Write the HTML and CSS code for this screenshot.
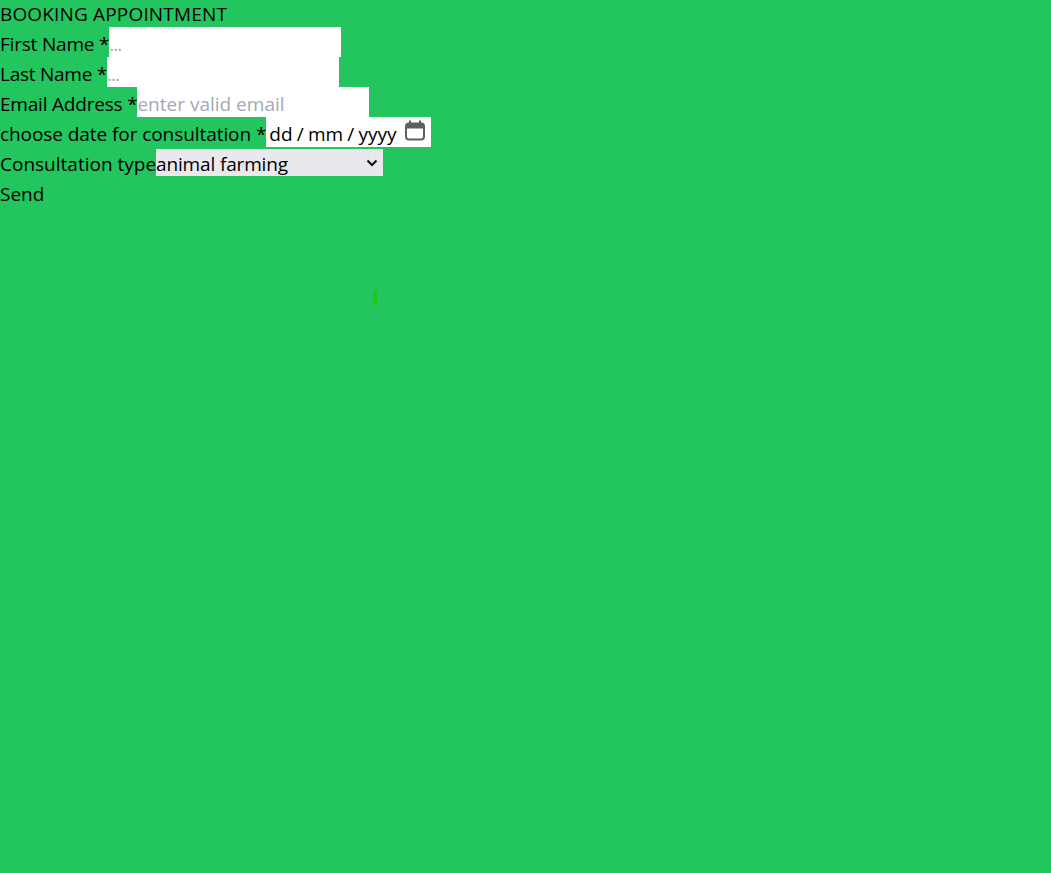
FILE: index.html
```html
<!DOCTYPE html>
<html lang="en">
<head>
    <meta charset="UTF-8">
    <meta name="viewport" content="width=device-width, initial-scale=1.0">
    <title>Booking Appointment</title>
    <link rel="stylesheet" href="styles.css">
</head>
<body>
    <form class="booking-form">
        <div class="form-title">BOOKING APPOINTMENT</div>
        <div class="form-row">
            <label for="firstName" class="label-tight">First Name *</label>
            <input type="text" id="firstName" class="text-field" placeholder="...">
        </div>
        <div class="form-row">
            <label for="lastName" class="label-last">Last Name *</label>
            <input type="text" id="lastName" class="text-field" placeholder="...">
        </div>
        <div class="form-row">
            <label for="email" class="label-tight">Email Address *</label>
            <input type="email" id="email" class="text-field email-field" placeholder="enter valid email">
        </div>
        <div class="form-row">
            <label class="label-date">choose date for consultation *</label>
            <div class="date-field">
                <span class="date-text">dd / mm / yyyy</span>
                <svg class="date-icon" width="22" height="22" viewBox="0 0 22 22">
                    <path d="M6 .5V4M16 .5V4" stroke="#5f5f5f" stroke-width="2" fill="none"/>
                    <rect x="2" y="3.5" width="18" height="16" rx="3" fill="none" stroke="#5f5f5f" stroke-width="2"/>
                    <path d="M2 8.5V6a2.5 2.5 0 0 1 2.5-2.5h13A2.5 2.5 0 0 1 20 6v2.5z" fill="#5f5f5f"/>
                </svg>
            </div>
        </div>
        <div class="form-row">
            <label for="consultType">Consultation type</label>
            <div class="select-wrap">
                <select id="consultType" class="select-field">
                    <option>animal farming</option>
                    <option>crop farming</option>
                </select>
                <svg class="select-arrow" width="12" height="8" viewBox="0 0 12 8">
                    <path d="M1.5 1.5L6 6l4.5-4.5" stroke="#111111" stroke-width="2" fill="none"/>
                </svg>
            </div>
        </div>
        <div class="send-button">Send</div>
    </form>
    <div class="green-mark"></div>
</body>
</html>
```

FILE: styles.css
```css
body {
    margin: 0;
    min-height: 873px;
    background-color: #22c55e;
    color: #000000;
    font-family: 'Open Sans', sans-serif;
    font-size: 19px;
    position: relative;
}
.form-title {
    height: 27px;
    line-height: 28px;
    letter-spacing: 0.16px;
}
.form-row {
    display: flex;
    align-items: stretch;
    height: 30px;
    line-height: 34px;
}
.label-tight {
    letter-spacing: -0.2px;
}
.label-last {
    letter-spacing: -0.25px;
}
.label-date {
    letter-spacing: -0.07px;
}
.text-field {
    width: 232px;
    height: 30px;
    box-sizing: border-box;
    border: none;
    border-radius: 0;
    padding: 4px 0 0;
    outline: none;
    background: #ffffff;
    font-family: inherit;
    font-size: 19px;
    letter-spacing: -1px;
}
.email-field {
    letter-spacing: 0;
}
.text-field::placeholder {
    color: #a3a9b5;
    opacity: 1;
}
.date-field {
    display: flex;
    align-items: center;
    justify-content: space-between;
    width: 165px;
    height: 30px;
    box-sizing: border-box;
    padding: 0 5px 0 3px;
    background: #ffffff;
}
.date-text {
    margin-top: 4px;
    word-spacing: -0.75px;
}
.date-icon {
    flex-shrink: 0;
    margin-bottom: 3px;
}
.select-wrap {
    position: relative;
    width: 227px;
    height: 27px;
    margin-top: 2px;
}
.select-field {
    display: block;
    appearance: none;
    width: 100%;
    height: 27px;
    border: none;
    border-radius: 0;
    padding: 2px 0 0;
    outline: none;
    background-color: #e9e9ed;
    color: #000000;
    font-family: inherit;
    font-size: 19px;
    letter-spacing: -0.15px;
}
.select-arrow {
    position: absolute;
    right: 5px;
    top: 10px;
}
.send-button {
    height: 30px;
    line-height: 34px;
}
.green-mark {
    position: absolute;
    left: 373px;
    top: 290px;
    width: 4px;
    height: 15px;
    background: #22c51e;
}
```
